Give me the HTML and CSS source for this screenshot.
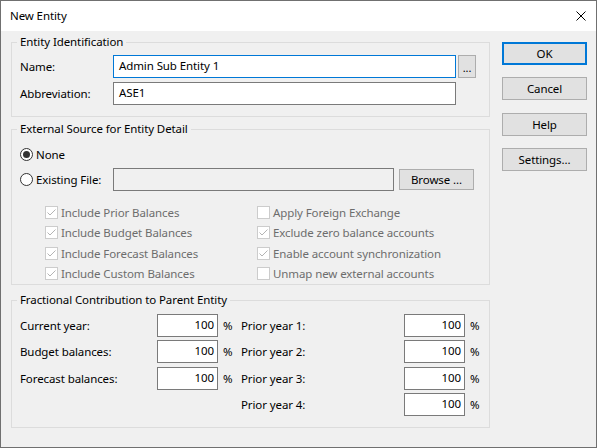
FILE: index.html
```html
<!DOCTYPE html>
<html lang="en">

<head>
    <meta charset="UTF-8">
    <title>New Entity</title>
    <link rel="stylesheet" href="styles.css">
</head>

<body>
    <div class="window">

        <!-- title bar -->
        <div class="titlebar">
            <span class="title">New Entity</span>
            <svg class="close" width="10" height="10" viewBox="0 0 10 10">
                <path d="M0.5 0.5 L9.5 9.5 M9.5 0.5 L0.5 9.5" stroke="#000" stroke-width="1" fill="none" />
            </svg>
        </div>

        <div class="dialog">
            <div class="groups">

                <!-- Entity Identification -->
                <fieldset class="group group-ident">
                    <legend>Entity Identification</legend>
                    <div class="field-row first">
                        <span class="label">Name:</span>
                        <div class="textbox wide focused">Admin Sub Entity 1</div>
                        <div class="btn dots">...</div>
                    </div>
                    <div class="field-row">
                        <span class="label">Abbreviation:</span>
                        <div class="textbox wide">ASE1</div>
                    </div>
                </fieldset>

                <!-- External Source -->
                <fieldset class="group group-source">
                    <legend>External Source for Entity Detail</legend>
                    <div class="radio-row">
                        <svg class="radio" width="13" height="13" viewBox="0 0 13 13">
                            <circle cx="6.5" cy="6.5" r="6" fill="#fff" stroke="#333" />
                            <circle cx="6.5" cy="6.5" r="3.5" fill="#333" />
                        </svg>
                        <span>None</span>
                    </div>
                    <div class="field-row file-row">
                        <div class="label radio-label">
                            <svg class="radio" width="13" height="13" viewBox="0 0 13 13">
                                <circle cx="6.5" cy="6.5" r="6" fill="#fff" stroke="#333" />
                            </svg>
                            <span>Existing File:</span>
                        </div>
                        <div class="textbox file disabled"></div>
                        <div class="btn browse">Browse ...</div>
                    </div>
                    <div class="check-grid">
                        <div class="check on"><span class="box"><svg width="11" height="11" viewBox="0 0 11 11"><path d="M1.5 5.5 L4 8 L9.5 2.5" stroke="#b4b4b4" fill="none" /></svg></span>Include Prior Balances</div>
                        <div class="check"><span class="box"></span>Apply Foreign Exchange</div>
                        <div class="check on"><span class="box"><svg width="11" height="11" viewBox="0 0 11 11"><path d="M1.5 5.5 L4 8 L9.5 2.5" stroke="#b4b4b4" fill="none" /></svg></span>Include Budget Balances</div>
                        <div class="check on"><span class="box"><svg width="11" height="11" viewBox="0 0 11 11"><path d="M1.5 5.5 L4 8 L9.5 2.5" stroke="#b4b4b4" fill="none" /></svg></span>Exclude zero balance accounts</div>
                        <div class="check on"><span class="box"><svg width="11" height="11" viewBox="0 0 11 11"><path d="M1.5 5.5 L4 8 L9.5 2.5" stroke="#b4b4b4" fill="none" /></svg></span>Include Forecast Balances</div>
                        <div class="check on"><span class="box"><svg width="11" height="11" viewBox="0 0 11 11"><path d="M1.5 5.5 L4 8 L9.5 2.5" stroke="#b4b4b4" fill="none" /></svg></span>Enable account synchronization</div>
                        <div class="check on"><span class="box"><svg width="11" height="11" viewBox="0 0 11 11"><path d="M1.5 5.5 L4 8 L9.5 2.5" stroke="#b4b4b4" fill="none" /></svg></span>Include Custom Balances</div>
                        <div class="check"><span class="box"></span>Unmap new external accounts</div>
                    </div>
                </fieldset>

                <!-- Fractional Contribution -->
                <fieldset class="group group-frac">
                    <legend>Fractional Contribution to Parent Entity</legend>
                    <div class="frac-grid">
                        <span class="label">Current year:</span>
                        <div class="textbox num">100</div>
                        <span class="pct">%</span>
                        <span class="label">Prior year 1:</span>
                        <div class="textbox num">100</div>
                        <span class="pct">%</span>

                        <span class="label">Budget balances:</span>
                        <div class="textbox num">100</div>
                        <span class="pct">%</span>
                        <span class="label">Prior year 2:</span>
                        <div class="textbox num">100</div>
                        <span class="pct">%</span>

                        <span class="label">Forecast balances:</span>
                        <div class="textbox num">100</div>
                        <span class="pct">%</span>
                        <span class="label">Prior year 3:</span>
                        <div class="textbox num">100</div>
                        <span class="pct">%</span>

                        <span></span>
                        <span></span>
                        <span></span>
                        <span class="label">Prior year 4:</span>
                        <div class="textbox num">100</div>
                        <span class="pct">%</span>
                    </div>
                </fieldset>
            </div>

            <!-- right buttons -->
            <div class="buttons">
                <div class="btn cmd default">OK</div>
                <div class="btn cmd">Cancel</div>
                <div class="btn cmd">Help</div>
                <div class="btn cmd">Settings...</div>
            </div>
        </div>
    </div>
</body>

</html>
```

FILE: styles.css
```css
/* general */
html,
body {
    margin: 0;
    padding: 0;
}

body {
    font-family: "Noto Sans", "Liberation Sans", sans-serif;
    font-size: 11.5px;
    letter-spacing: -0.1px;
    color: #000;
    background: #f0f0f0;
}

* {
    box-sizing: border-box;
}

/* window frame */
.window {
    width: 597px;
    height: 448px;
    border: 1px solid #707070;
    background: #f0f0f0;
    display: flex;
    flex-direction: column;
}

.titlebar {
    height: 30px;
    background: #fff;
    display: flex;
    align-items: center;
    justify-content: space-between;
    padding: 0 10px 0 9px;
}

.title {
    line-height: 16px;
}

.close {
    display: block;
    margin-top: -1px;
}

/* dialog body */
.dialog {
    flex: 1;
    display: flex;
    padding: 3px 9px 0 10px;
}

.groups {
    width: 479px;
    display: flex;
    flex-direction: column;
}

.buttons {
    width: 85px;
    margin-left: 12px;
    margin-top: 8px;
    display: flex;
    flex-direction: column;
    gap: 12.33px;
}

/* group boxes */
.group {
    margin: 0;
    border: 1px solid #dcdcdc;
    padding: 0 12px 11px 8px;
    min-width: 0;
}

.group legend {
    padding: 0 3px;
    margin-left: -3px;
    line-height: 16px;
}

.group-source {
    margin-top: 4px;
    padding-bottom: 0;
}

.group-frac {
    margin-top: 7px;
}

/* rows */
.field-row {
    display: flex;
    align-items: center;
    height: 23px;
    margin-top: 4px;
}

.field-row.first {
    margin-top: 5px;
}

.label {
    width: 93px;
    flex-shrink: 0;
}

.textbox {
    height: 23px;
    background: #fff;
    border: 1px solid #7a7a7a;
    padding: 0 5px;
    line-height: 20px;
    white-space: nowrap;
}

.textbox.wide {
    width: 343px;
}

.textbox.focused {
    border-color: #0078d7;
}

.textbox.file {
    width: 281px;
}

.textbox.disabled {
    background: #f0f0f0;
}

.textbox.num {
    text-align: right;
    padding: 0 3px;
    line-height: 19px;
}

/* push buttons */
.btn {
    background: #e1e1e1;
    border: 1px solid #adadad;
    text-align: center;
}

.btn.dots {
    width: 18px;
    height: 23px;
    margin-left: 2px;
    line-height: 23px;
    font-size: 11px;
}

.btn.browse {
    width: 75px;
    height: 21px;
    margin-left: 5px;
    line-height: 19px;
}

.btn.cmd {
    height: 23px;
    line-height: 21px;
}

.btn.default {
    border: 2px solid #0078d7;
    line-height: 19px;
}

/* radio buttons */
.radio-row {
    display: flex;
    align-items: center;
    height: 16px;
    margin-top: 9px;
}

.radio {
    display: block;
    margin-right: 3px;
    flex-shrink: 0;
}

.radio-label {
    display: flex;
    align-items: center;
}

.file-row {
    margin-top: 6px;
}

/* check boxes */
.check-grid {
    display: grid;
    grid-template-columns: 212px auto;
    grid-auto-rows: 20.5px;
    margin: 11px 0 0 25px;
}

.check {
    display: flex;
    align-items: center;
    color: #6d6d6d;
    white-space: nowrap;
}

.check .box {
    width: 13px;
    height: 13px;
    border: 1px solid #cccccc;
    background: #fff;
    margin-right: 3px;
    flex-shrink: 0;
}

.check .box svg {
    display: block;
}

/* fractional contribution grid */
.frac-grid {
    display: grid;
    grid-template-columns: 137px 61px 23px 163px 61px auto;
    grid-auto-rows: 23px;
    row-gap: 3.33px;
    align-items: center;
    margin-top: 6px;
}

.frac-grid .label {
    width: auto;
}

.pct {
    padding-left: 5px;
}
```
